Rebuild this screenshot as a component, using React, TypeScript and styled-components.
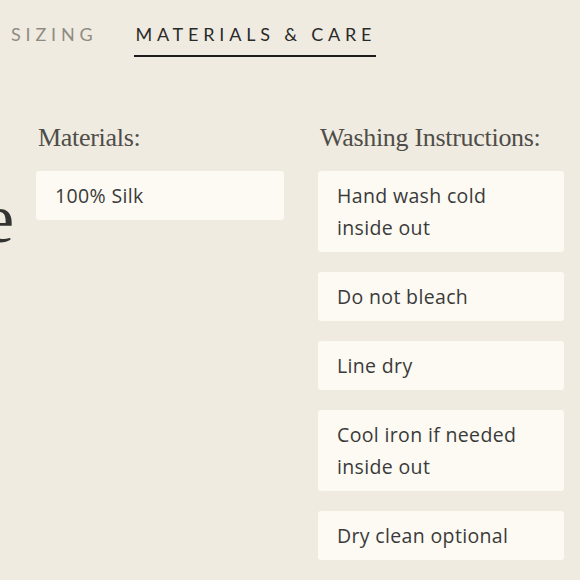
import React from "react";
import styled, { createGlobalStyle } from "styled-components";

const GlobalStyle = createGlobalStyle`
  html, body {
    margin: 0;
    padding: 0;
    background: #f0ebe0;
  }
  body {
    width: 580px;
    height: 580px;
    overflow: hidden;
  }
`;

const Page = styled.div`
  width: 580px;
  height: 580px;
  overflow: hidden;
  background: #f0ebe0;
  font-family: "Open Sans", "Lato", sans-serif;
`;

const TabBar = styled.nav`
  display: flex;
  gap: 37px;
  padding: 24px 0 0 10px;
  height: 34px;
`;

const Tab = styled.div<{ $active?: boolean }>`
  font-family: "Lato", sans-serif;
  font-size: 18px;
  letter-spacing: 4.8px;
  line-height: 20px;
  color: ${({ $active }) => ($active ? "#2a2a2a" : "#8f8b84")};
  padding: 0 0 11px 1px;
  border-bottom: 2.5px solid ${({ $active }) => ($active ? "#1c1c1c" : "transparent")};
  align-self: flex-start;
`;

const Body = styled.div`
  display: flex;
  padding-top: 65px;
`;

/* big page title, mostly scrolled off to the left */
const Hero = styled.div`
  flex: 0 0 50px;
  min-width: 0;
  margin-left: -36px;
  margin-right: 22px;
  padding-top: 61px;
  display: flex;
  justify-content: flex-end;
  align-items: flex-start;
  font-family: "Liberation Serif", serif;
  font-size: 70px;
  line-height: 1;
  color: #333331;
  white-space: nowrap;
`;

const Column = styled.section<{ $width: number }>`
  flex: 0 0 ${({ $width }) => $width}px;
  display: flex;
  flex-direction: column;
  gap: 20px;
`;

const ColumnGap = styled.div`
  flex: 0 0 34px;
`;

const Heading = styled.h3`
  margin: 0 0 -2px 2px;
  font-family: "Liberation Serif", serif;
  font-weight: normal;
  font-size: 26px;
  line-height: 30px;
  color: #4e4d49;
  letter-spacing: -0.3px;
  white-space: nowrap;
`;

const Card = styled.div`
  background: #fcfaf3;
  border-radius: 3px;
  padding: 8.5px 19px;
  font-size: 19.5px;
  letter-spacing: 0.35px;
  line-height: 32px;
  color: #3a3a3a;
`;

const washing = [
  ["Hand wash cold", "inside out"],
  ["Do not bleach"],
  ["Line dry"],
  ["Cool iron if needed", "inside out"],
  ["Dry clean optional"],
];

export default function App() {
  return (
    <Page>
      <GlobalStyle />
      <TabBar>
        <Tab>SIZING</Tab>
        <Tab $active>MATERIALS &amp; CARE</Tab>
      </TabBar>
      <Body>
        <Hero>Care</Hero>
        <Column $width={248}>
          <Heading>Materials:</Heading>
          <Card>100% Silk</Card>
        </Column>
        <ColumnGap />
        <Column $width={246}>
          <Heading>Washing Instructions:</Heading>
          {washing.map((lines) => (
            <Card key={lines[0]}>
              {lines.map((l, i) => (
                <React.Fragment key={l}>
                  {i > 0 && <br />}
                  {l}
                </React.Fragment>
              ))}
            </Card>
          ))}
        </Column>
      </Body>
    </Page>
  );
}
